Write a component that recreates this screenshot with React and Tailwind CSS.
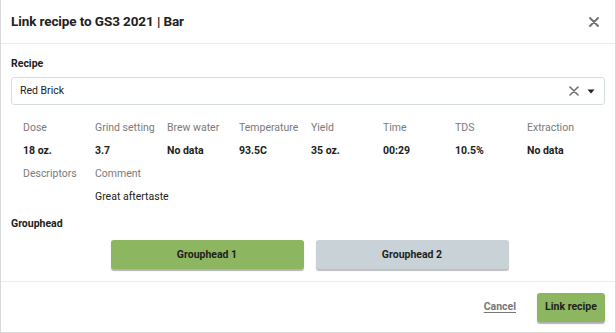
import React from "react";

const cols = [
  ["Dose", "18 oz."],
  ["Grind setting", "3.7"],
  ["Brew water", "No data"],
  ["Temperature", "93.5C"],
  ["Yield", "35 oz."],
  ["Time", "00:29"],
  ["TDS", "10.5%"],
  ["Extraction", "No data"],
];

export default function App() {
  return (
    <div
      className="w-[616px] h-[333px] bg-white border-l border-r border-b border-[#d9d9d9] overflow-hidden flex flex-col text-[#212121]"
      style={{ fontFamily: "Roboto, 'Liberation Sans', sans-serif" }}
    >
      <div className="h-[44px] shrink-0 flex items-center justify-between pl-[10px] pr-[16px] border-b border-[#ececec]">
        <div className="text-[13.5px] font-bold tracking-[-0.1px]">Link recipe to GS3 2021 | Bar</div>
        <svg width="10" height="10" viewBox="0 0 10 10" className="text-[#6f6f6f]">
          <path d="M1 1L9 9M9 1L1 9" stroke="currentColor" strokeWidth="1.8" strokeLinecap="round" />
        </svg>
      </div>
      <div className="flex-1 px-[10px] pt-[13px]">
        <div className="text-[10.5px] font-bold leading-[14px]">Recipe</div>
        <div className="mt-[6px] h-[28px] border border-[#d6dde0] rounded-[3px] flex items-center pl-[8px] pr-[9px]">
          <div className="flex-1 text-[10.5px]">Red Brick</div>
          <svg width="10" height="10" viewBox="0 0 10 10" className="text-[#6f6f6f] mr-[8px]">
            <path d="M1 1L9 9M9 1L1 9" stroke="currentColor" strokeWidth="1.6" strokeLinecap="round" />
          </svg>
          <svg width="8" height="5" viewBox="0 0 8 5" className="text-[#222]">
            <path d="M0.5 0.5H7.5L4 4.5Z" fill="currentColor" />
          </svg>
        </div>
        <div className="pl-[12px] pt-[16px] grid grid-cols-[repeat(8,72px)] gap-y-[9px] text-[10.5px] leading-[14px]">
          {cols.map(([l]) => (
            <div key={l} className="text-[#7a7a7a] whitespace-nowrap">{l}</div>
          ))}
          {cols.map(([l, v]) => (
            <div key={l + "v"} className="font-bold whitespace-nowrap">{v}</div>
          ))}
          <div className="text-[#7a7a7a]">Descriptors</div>
          <div className="text-[#7a7a7a] col-span-7">Comment</div>
          <div></div>
          <div className="col-span-7">Great aftertaste</div>
        </div>
        <div className="mt-[13px] text-[10.5px] font-bold leading-[14px]">Grouphead</div>
        <div className="mt-[9px] flex justify-center gap-[12px] pl-[3px]">
          <button className="w-[193px] h-[29px] rounded-[3px] bg-[#8db660] shadow-[0_1.5px_1px_rgba(0,0,0,0.3)] text-[10.5px] font-bold text-[#1f1f1f]">
            Grouphead 1
          </button>
          <button className="w-[193px] h-[29px] rounded-[3px] bg-[#c8d2d7] shadow-[0_1.5px_1px_rgba(0,0,0,0.25)] text-[10.5px] font-bold text-[#1f1f1f]">
            Grouphead 2
          </button>
        </div>
      </div>
      <div className="h-[51px] shrink-0 border-t border-[#ececec] flex items-center justify-end pr-[10px] gap-[21px]">
        <span className="text-[10.5px] font-bold text-[#777] underline underline-offset-2">Cancel</span>
        <button className="h-[29px] w-[68px] rounded-[3px] bg-[#8db660] shadow-[0_1.5px_1px_rgba(0,0,0,0.3)] text-[10.5px] font-bold text-[#1f1f1f]">
          Link recipe
        </button>
      </div>
    </div>
  );
}
